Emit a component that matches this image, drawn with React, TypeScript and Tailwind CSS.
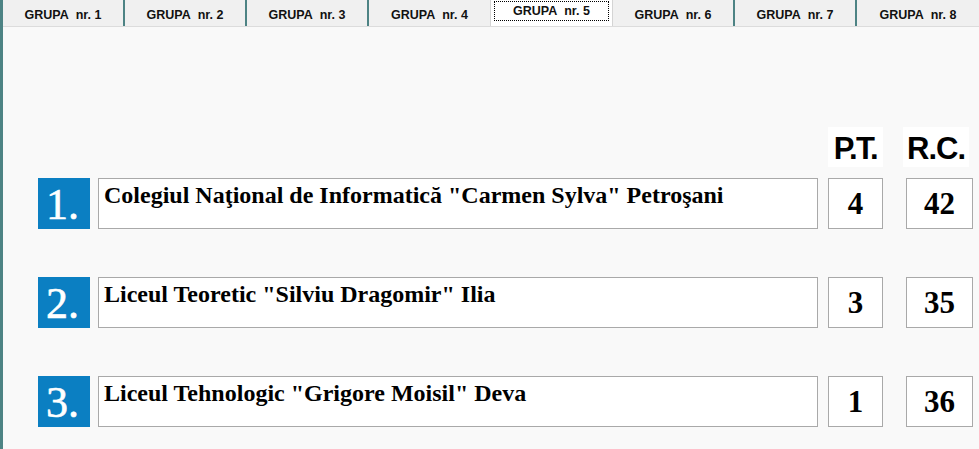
import React from 'react'

const tabs = [1, 2, 3, 4, 5, 6, 7, 8]
const active = 5

const rows = [
    { nr: 1, name: 'Colegiul Naţional de Informatică "Carmen Sylva" Petroşani', pt: 4, rc: 42 },
    { nr: 2, name: 'Liceul Teoretic "Silviu Dragomir" Ilia', pt: 3, rc: 35 },
    { nr: 3, name: 'Liceul Tehnologic "Grigore Moisil" Deva', pt: 1, rc: 36 },
]

function Tab({ n }: { n: number }) {
    const isActive = n === active
    // the tab just before the active one, the active one and the last one have no teal divider
    const divider = n === active - 1 || n === active
        ? 'border-r border-[#d4d4d4]'
        : n === tabs.length ? '' : 'border-r-2 border-[#4d8384]'

    if (isActive) {
        return (
            <div className={`w-[122px] h-[26px] bg-white flex px-[3px] pt-[1px] ${divider}`}>
                <div className="w-full h-[20px] border border-dotted border-black flex items-center justify-center text-[12.5px] font-bold text-[#111]">
                    GRUPA&nbsp;&nbsp;nr. {n}
                </div>
            </div>
        )
    }

    return (
        <div className={`w-[122px] h-[26px] flex items-center justify-center pt-[4px] text-[12.5px] font-bold text-[#111] ${divider}`}>
            GRUPA&nbsp;&nbsp;nr. {n}
        </div>
    )
}

export default function App() {
    return (
        <div
            className="w-[979px] h-[449px] overflow-hidden bg-[#f9f9f9] border-l-[3px] border-[#4d8384] flex flex-col"
            style={{ fontFamily: '"Liberation Sans", Arial, sans-serif' }}
        >
            {/* tab strip */}
            <div className="flex h-[27px] bg-[#f0f0f0] border-b border-[#dcdcdc]">
                {tabs.map(n => <Tab key={n} n={n} />)}
            </div>

            {/* results */}
            <div className="flex flex-col pl-[35px] pt-[100px]">
                <div className="flex h-[40px]">
                    <div className="w-[790px]" />
                    <div className="w-[55px] bg-white flex items-center justify-center pt-[2px] text-[31px] font-bold leading-none tracking-[-1.5px] text-black">P.T.</div>
                    <div className="w-[66px] ml-[20px] bg-white flex items-center justify-center pt-[2px] text-[31px] font-bold leading-none tracking-[-1px] text-black">R.C.</div>
                </div>

                <div className="flex flex-col gap-[48px] mt-[11px]" style={{ fontFamily: '"Liberation Serif", "Times New Roman", serif' }}>
                    {rows.map(r => (
                        <div key={r.nr} className="flex h-[51px]">
                            <div className="w-[52px] h-[51px] bg-[#0b7fc2] text-white text-[44px] leading-none flex items-center pl-[8px] pt-[3px] [-webkit-text-stroke:0.6px_white]">
                                {r.nr}.
                            </div>
                            <div className="w-[720px] ml-[8px] h-[51px] bg-white border border-[#a9a9a9] px-[5px] pt-[1px] text-[24px] font-bold leading-tight text-black">
                                {r.name}
                            </div>
                            <div className="w-[55px] ml-[10px] h-[51px] bg-white border border-[#a9a9a9] flex items-center justify-center text-[31px] font-bold leading-none text-black">
                                {r.pt}
                            </div>
                            <div className="w-[67px] ml-[23px] h-[51px] bg-white border border-[#a9a9a9] flex items-center justify-center text-[31px] font-bold leading-none text-black">
                                {r.rc}
                            </div>
                        </div>
                    ))}
                </div>
            </div>
        </div>
    )
}
